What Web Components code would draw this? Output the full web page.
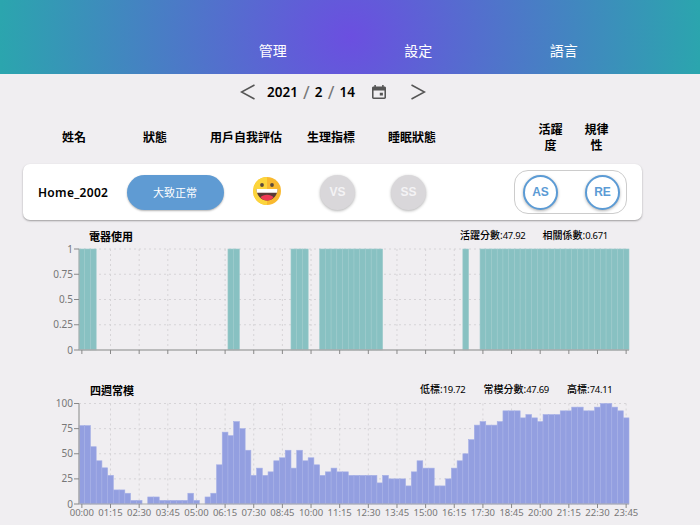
<!DOCTYPE html>
<html><head><meta charset="utf-8">
<style>
html,body{margin:0;padding:0;background:#f0eef1;overflow:hidden;width:700px;height:525px}
body{font-family:"Noto Sans","Noto Sans CJK TC",sans-serif;color:#000}
</style></head><body>
<app-header></app-header>
<date-bar></date-bar>
<col-heads></col-heads>
<user-card></user-card>
<act-chart></act-chart>
<norm-chart></norm-chart>
<script>
const FONT='"Noto Sans","Noto Sans CJK TC",sans-serif';
class AppHeader extends HTMLElement{constructor(){super();this.attachShadow({mode:'open'}).innerHTML=`<style>
:host{display:flex;height:74px;background:radial-gradient(ellipse 350px 350px at 50% 50%,#6b4fe0,#2ba5ae 100%);color:#fff;box-sizing:border-box;padding:42px 0 0 200px;font:14px/18px ${FONT}}
span{width:145.500px;text-align:center}
</style><span>管理</span><span>設定</span><span>語言</span>`}}
class DateBar extends HTMLElement{constructor(){super();this.attachShadow({mode:'open'}).innerHTML=`<style>
:host{display:flex;align-items:center;height:36px;box-sizing:border-box;padding-left:240px;font:600 13.500px/36px ${FONT}}
svg{display:block}
.d{margin-left:12px;display:flex;width:88px;white-space:pre;justify-content:space-between}
.s{font-weight:400;color:#777;font-size:18px}
.cal{margin-left:17px}.nx{margin-left:24.500px}
</style>
<svg width="15" height="16" viewBox="0 0 15 16"><path d="M14.500 1L1.500 8l13 7" fill="none" stroke="#555" stroke-width="1.500"/></svg>
<div class="d"><span>2021</span><span class="s">/</span><span>2</span><span class="s">/</span><span>14</span></div>
<svg class="cal" width="14" height="14" viewBox="3 1 18 20" preserveAspectRatio="none"><path fill="#555" d="M16 1v2H8V1H6v2H5c-1.110 0-2 .9-2 2v14c0 1.100.89 2 2 2h14c1.100 0 2-.9 2-2V5c0-1.100-.9-2-2-2h-1V1h-2zM5 9h14v10H5V9zm8 3h4v4h-4v-4z" fill-rule="evenodd"/></svg>
<svg class="nx" width="15" height="16" viewBox="0 0 15 16"><path d="M.5 1L13.500 8l-13 7" fill="none" stroke="#555" stroke-width="1.500"/></svg>`}}
class ColHeads extends HTMLElement{constructor(){super();this.attachShadow({mode:'open'}).innerHTML=`<style>
:host{display:grid;grid-template-columns:80px 82px 100px 70px 92px 70px 46px 46px;height:54px;margin-left:34px;align-items:center;font:bold 12px/16px ${FONT};text-align:center}
div{position:relative;top:1px}
.w{padding:0 8px;margin-left:-1px}
</style><div>姓名</div><div>狀態</div><div>用戶自我評估</div><div>生理指標</div><div>睡眠狀態</div><div></div><div class="w">活躍度</div><div class="w">規律性</div>`}}
class RoundBtn extends HTMLElement{constructor(){super();this.attachShadow({mode:'open'}).innerHTML=`<style>
:host{display:flex;align-items:center;justify-content:center;width:35px;height:35px;border-radius:50%;box-sizing:border-box;background:#d9d7da;color:#f4f3f5;font:bold 12px "Liberation Sans",sans-serif;box-shadow:0 1px 3px rgba(0,0,0,.3)}
:host([on]){background:#fff;border:2px solid #5b9bd5;color:#5b9bd5}
</style><slot></slot>`}}
class UserCard extends HTMLElement{constructor(){super();this.attachShadow({mode:'open'}).innerHTML=`<style>
:host{display:flex;align-items:center;box-sizing:border-box;width:619px;height:56px;margin-left:23px;background:#fff;border-radius:7px;padding-left:15px;box-shadow:0 1px 2px rgba(0,0,0,.35)}
.n{width:88.500px;font:600 12px ${FONT};letter-spacing:.3px}
.p{width:97px;height:35px;border-radius:18px;background:#5f9bd3;color:#fff;font:11px/35px ${FONT};text-align:center;box-shadow:0 1px 2px rgba(0,0,0,.3)}
svg{display:block;margin:-3px 0 0 29px}
.v{margin-left:39.500px}.s{margin-left:36px}
.box{margin-left:88px;width:113px;height:44px;box-sizing:border-box;border:1px solid #ccc;border-radius:14px;display:flex;align-items:center;justify-content:space-between;padding:0 6px 0 8px}
</style><div class="n">Home_2002</div><div class="p">大致正常</div>
<svg width="28" height="28" viewBox="0 0 28 28">
<circle cx="14" cy="14" r="14" fill="#f9b92f"/><path d="M14 0a14 14 0 0 0 0 28z" fill="#fcd53c"/><circle cx="9" cy="8" r="1.900" fill="#5b4a3c"/><circle cx="19" cy="8" r="1.900" fill="#5b4a3c"/>
<path d="M3.500 12h21c.3 5.500-4 11.500-10.500 11.500S3.200 17.500 3.500 12z" fill="#5a3a36"/><path d="M3.500 12h21c0 1.400-.1 2.500-.5 3.800H4c-.4-1.300-.5-2.400-.5-3.800z" fill="#fff"/><path d="M7.500 20.200c1.200-1.500 3.800-2.500 6.500-2.500s5.300 1 6.500 2.500c-1.600 2-3.800 3.300-6.500 3.300s-4.900-1.300-6.500-3.300z" fill="#ef3a55"/></svg>
<round-btn class="v">VS</round-btn><round-btn class="s">SS</round-btn>
<div class="box"><round-btn on>AS</round-btn><round-btn on>RE</round-btn></div>`}}
const X0=79,BW=550/96;
const TIMES=[];for(let i=0;i<96;i+=5){const m=i*15;TIMES.push(String(Math.floor(m/60)).padStart(2,'0')+':'+String(m%60).padStart(2,'0'))}
function grid(top,h,n){let s='';for(let k=0;k<n;k++){const y=top+h*k/(n);s+=`<line x1="${X0}" x2="629" y1="${y}" y2="${y}"/>`}
for(let i=5;i<96;i+=5){const x=X0+(i+.5)*BW;s+=`<line x1="${x}" x2="${x}" y1="${top}" y2="${top+h}"/>`}
return `<g stroke="#d6d4d7" stroke-width="1" stroke-dasharray="2 3">${s}</g>`}
function ticks(base){let s='';for(let i=0;i<96;i+=5){const x=X0+(i+.5)*BW;s+=`<line x1="${x}" x2="${x}" y1="${base}" y2="${base+4}" stroke="#888"/>`}return s}
const CHART_STYLE=`:host{display:block;position:relative}
.h{display:flex;align-items:flex-start;font:10px/14px ${FONT};white-space:pre}
.t{font:bold 11px/14px ${FONT}}
b{font-weight:500}
i{font-style:normal;font-size:9.500px;letter-spacing:-.3px}
svg{display:block;overflow:visible;font-family:${FONT}}`;
class ActChart extends HTMLElement{constructor(){super();
const on=new Set();[[0,2],[26,27],[37,39],[42,52],[67,67],[70,95]].forEach(([a,b])=>{for(let i=a;i<=b;i++)on.add(i)});
const top=1,h=101;let bars='';on.forEach(i=>{bars+=`<rect x="${X0+i*BW}" y="${top}" width="${BW}" height="${h}" fill="#88c1c2" stroke="#9dcbcc" stroke-width=".6"/>`});
let lab='';[[1,0],[.75,.25],[.5,.5],[.25,.75],[0,1]].forEach(([v,f])=>{const y=top+h*f;lab+=`<line x1="74" x2="${X0}" y1="${y}" y2="${y}" stroke="#888"/><text x="73" y="${y+3.500}" text-anchor="end" fill="#777" font-size="10">${v}</text>`});
this.attachShadow({mode:'open'}).innerHTML=`<style>${CHART_STYLE}:host{margin-top:8px}.h{height:20px;padding-left:89px}.t{margin-top:2px}.r1{margin-left:327px}.r2{margin-left:17px}</style>
<div class="h"><span class="t">電器使用</span><span class="r1"><b>活躍分數</b>:<i>47.92</i></span><span class="r2"><b>相關係數</b>:<i>0.671</i></span></div>
<svg width="700" height="125" viewBox="0 0 700 125">${grid(top,h,4)}${bars}
<line x1="${X0}" x2="${X0}" y1="${top}" y2="${top+h}" stroke="#aaa"/><line x1="${X0}" x2="629" y1="${top+h}" y2="${top+h}" stroke="#aaa" stroke-width="1.600"/>${lab}${ticks(top+h)}</svg>`}}
const NORM=[78,78,57,43,36,28.5,14,14,10.7,3.6,3.6,0,7,7,3.6,3.6,3.6,3.6,3.6,10.7,3.6,0,7,10.7,39,71.5,68,82,75,53.5,28.5,35.7,28.5,32,43,46,53.5,35.7,53.5,43,46,39,28.5,32,35.7,32,32,28.5,28.5,28.5,28.5,28.5,21,28.5,25,25,25,18,32,43,35.7,35.7,18,18,25,35.7,43,50,64,78.500,82,78.500,78.500,82,92.700,92.700,92.700,85.700,89,85.700,82,89,89,89,92.700,92.700,96.400,96.400,92.700,92.700,96.400,100,100,96.400,92.700,85.700];
class NormChart extends HTMLElement{constructor(){super();
const top=1.5,h=100.5;let bars='';NORM.forEach((v,i)=>{if(!v)return;const bh=h*v/100;bars+=`<rect x="${X0+i*BW}" y="${top+h-bh}" width="${BW}" height="${bh}" fill="#939fe0" stroke="#a6b0e6" stroke-width=".6"/>`});
let lab='';[[100,0],[75,.25],[50,.5],[25,.75],[0,1]].forEach(([v,f])=>{const y=top+h*f;lab+=`<line x1="74" x2="${X0}" y1="${y}" y2="${y}" stroke="#888"/><text x="73" y="${y+3.500}" text-anchor="end" fill="#777" font-size="10">${v}</text>`});
let tl='';TIMES.forEach((t,k)=>{tl+=`<text x="${X0+(k*5+.5)*BW}" y="${top+h+12}" text-anchor="middle" fill="#777" font-size="9.500">${t}</text>`});
this.attachShadow({mode:'open'}).innerHTML=`<style>${CHART_STYLE}:host{margin-top:9px}.h{height:20px;padding-left:90px}.r1{margin-left:286px}.r2{margin-left:18px}.r3{margin-left:18px}.t{margin-top:2px}</style>
<div class="h"><span class="t">四週常模</span><span class="r1"><b>低標</b>:<i>19.72</i></span><span class="r2"><b>常模分數</b>:<i>47.69</i></span><span class="r3"><b>高標</b>:<i>74.11</i></span></div>
<svg width="700" height="120" viewBox="0 0 700 120">${grid(top,h,4)}${bars}
<line x1="${X0}" x2="${X0}" y1="${top}" y2="${top+h}" stroke="#aaa" stroke-width="1.500"/><line x1="${X0}" x2="629" y1="${top+h}" y2="${top+h}" stroke="#aaa"/>${lab}${ticks(top+h)}${tl}</svg>`}}
customElements.define('app-header',AppHeader);customElements.define('date-bar',DateBar);customElements.define('col-heads',ColHeads);customElements.define('round-btn',RoundBtn);customElements.define('user-card',UserCard);customElements.define('act-chart',ActChart);customElements.define('norm-chart',NormChart);
</script></body></html>
